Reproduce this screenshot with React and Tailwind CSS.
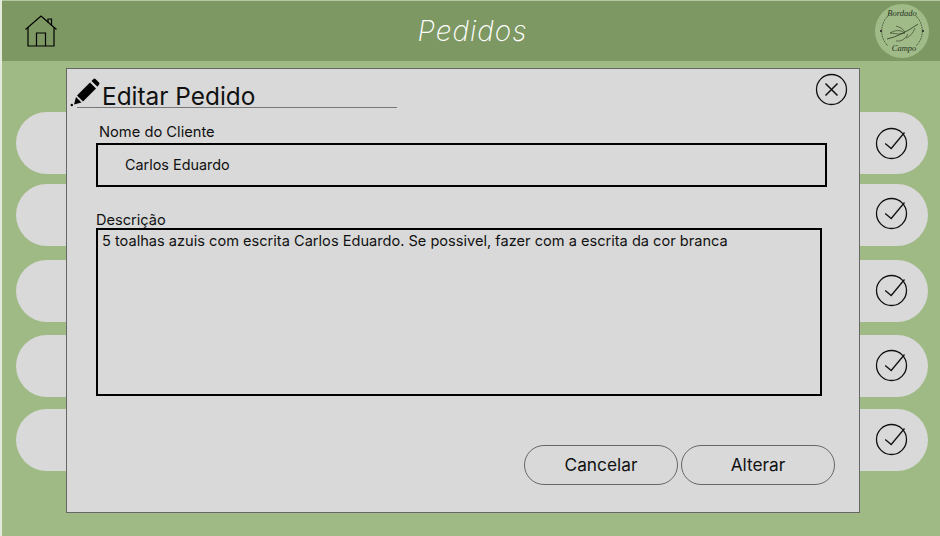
const ROWS = [
  { mt: 'mt-[51px]', check: 'mb-0' },
  { mt: 'mt-[10px]', check: 'mb-[3px]' },
  { mt: 'mt-[14px]', check: 'mb-[2px]' },
  { mt: 'mt-[13px]', check: 'mb-[2px]' },
  { mt: 'mt-[12px]', check: 'mb-[2px]' },
]

function HomeIcon() {
  return (
    <svg width="34" height="33" viewBox="0 0 34 33" fill="none" stroke="#000" strokeWidth="1.2">
      <path d="M1.5 14.5 L17 1 L32.5 14.5" />
      <path d="M24 7.5 V4 H27.5 V10.5" />
      <path d="M4 12.5 V31 H30 V12.5" />
      <path d="M12.5 31 V18 H21.5 V31" />
    </svg>
  )
}

function CheckIcon() {
  return (
    <svg width="33" height="33" viewBox="0 0 33 33" fill="none" stroke="#111" strokeWidth="1.3">
      <circle cx="16.5" cy="16.5" r="15" />
      <path d="M10.2 16.5 L16.2 21.5 L29.5 5.5" />
    </svg>
  )
}

function CloseIcon() {
  return (
    <svg width="33" height="33" viewBox="0 0 33 33" fill="none" stroke="#111">
      <circle cx="16.5" cy="16.5" r="15" strokeWidth="1.3" />
      <path d="M10.5 10.5 L22.5 22.5 M22.5 10.5 L10.5 22.5" strokeWidth="1.5" />
    </svg>
  )
}

function PencilIcon() {
  return (
    <svg width="30" height="30" viewBox="0 0 30 30" fill="#000">
      <path d="M7 18.5 L20 5.5 L26 11.5 L13 24.5 Z" />
      <path d="M21.5 4 L23.5 2 Q24.5 1 25.5 2 L29 5.5 Q30 6.5 29 7.5 L27.5 9.8 Z" />
      <path d="M6 20 L11.5 25.5 L4 27.5 Z" />
      <circle cx="1.8" cy="28" r="1.2" />
    </svg>
  )
}

function Logo() {
  return (
    <svg width="54" height="54" viewBox="0 0 54 54" fill="none">
      <circle cx="27" cy="27" r="27" fill="#a0bb87" />
      <path d="M13 12 A21 21 0 0 0 13 42" stroke="#33402a" strokeWidth="1" strokeDasharray="1 0.8" />
      <path d="M41 12 A21 21 0 0 1 41 42" stroke="#33402a" strokeWidth="1" strokeDasharray="1 0.8" />
      <circle cx="6" cy="27" r="1" fill="#222" />
      <circle cx="48" cy="27" r="1" fill="#222" />
      <text x="27" y="12" textAnchor="middle" fontSize="8.5" fontStyle="italic" fontFamily="'Liberation Serif', serif" fill="#26301f">Bordado</text>
      <text x="29" y="47" textAnchor="middle" fontSize="8.5" fontStyle="italic" fontFamily="'Liberation Serif', serif" fill="#26301f">Campo</text>
      <path d="M12 35 Q26 32 43 20" stroke="#2b3624" strokeWidth="0.8" />
      <path d="M15 29 Q23 24 30 29 Q24 31 15 29 M21 22 Q27 23 30 28 M21 37 Q29 38 33 30 M31 34 Q37 32 40 24" stroke="#2b3624" strokeWidth="0.6" />
    </svg>
  )
}

export default function App() {
  return (
    <div className="relative h-[536px] w-[940px] overflow-hidden border-l-2 border-[#e3ead9] bg-[#9fba85] font-['Inter',sans-serif]">
      <header className="grid h-[61px] grid-cols-[1fr_auto_1fr] items-center border-t border-[#b4c6a1] bg-[#7d9863] pl-[22px] pr-[11px]">
        <HomeIcon />
        <h1 className="mr-[8px] text-[28px] font-[150] italic tracking-[1px] text-white">Pedidos</h1>
        <div className="justify-self-end">
          <Logo />
        </div>
      </header>

      {/* Lista atras do modal */}
      {ROWS.map(({ mt, check }, i) => (
        <div key={i} className={`${mt} ml-[14px] flex h-[62px] w-[912px] items-center justify-end rounded-[31px] bg-[#d9d9d9] pr-[20px]`}>
          <div className={check}>
            <CheckIcon />
          </div>
        </div>
      ))}

      {/* Modal */}
      <div className="absolute left-[64px] top-[68px] h-[445px] w-[794px] border border-[#666] bg-[#d9d9d9] text-[#111]">
        <div className="absolute right-[11px] top-[4px]">
          <CloseIcon />
        </div>
        <div className="ml-[3px] mt-[8px] flex h-[30px] items-end">
          <PencilIcon />
          <span className="ml-[2px] text-[24.4px] leading-[22px]">Editar Pedido</span>
        </div>
        <div className="ml-[10px] h-px w-[320px] bg-[#777]" />

        <div className="ml-[32px] mt-[16px] h-[16px] text-[14.7px] leading-[17px]">Nome do Cliente</div>
        <div className="ml-[29px] mt-[3px] flex h-[44px] w-[731px] items-center border-2 border-black pl-[27px] text-[14.4px]">
          Carlos Eduardo
        </div>

        <div className="ml-[29px] mt-[25px] h-[16px] text-[14.6px] leading-[17px]">Descrição</div>
        <div className="ml-[29px] h-[168px] w-[726px] border-2 border-black pl-[4px] pt-[3px] text-[14.6px] leading-[17px]">
          5 toalhas azuis com escrita Carlos Eduardo. Se possivel, fazer com a escrita da cor branca
        </div>

        <div className="ml-[457px] mt-[49px] flex gap-[3px]">
          <button className="h-[40px] w-[154px] rounded-[20px] border border-[#666] text-[17.3px]">Cancelar</button>
          <button className="h-[40px] w-[154px] rounded-[20px] border border-[#666] text-[17.3px]">Alterar</button>
        </div>
      </div>
    </div>
  )
}
